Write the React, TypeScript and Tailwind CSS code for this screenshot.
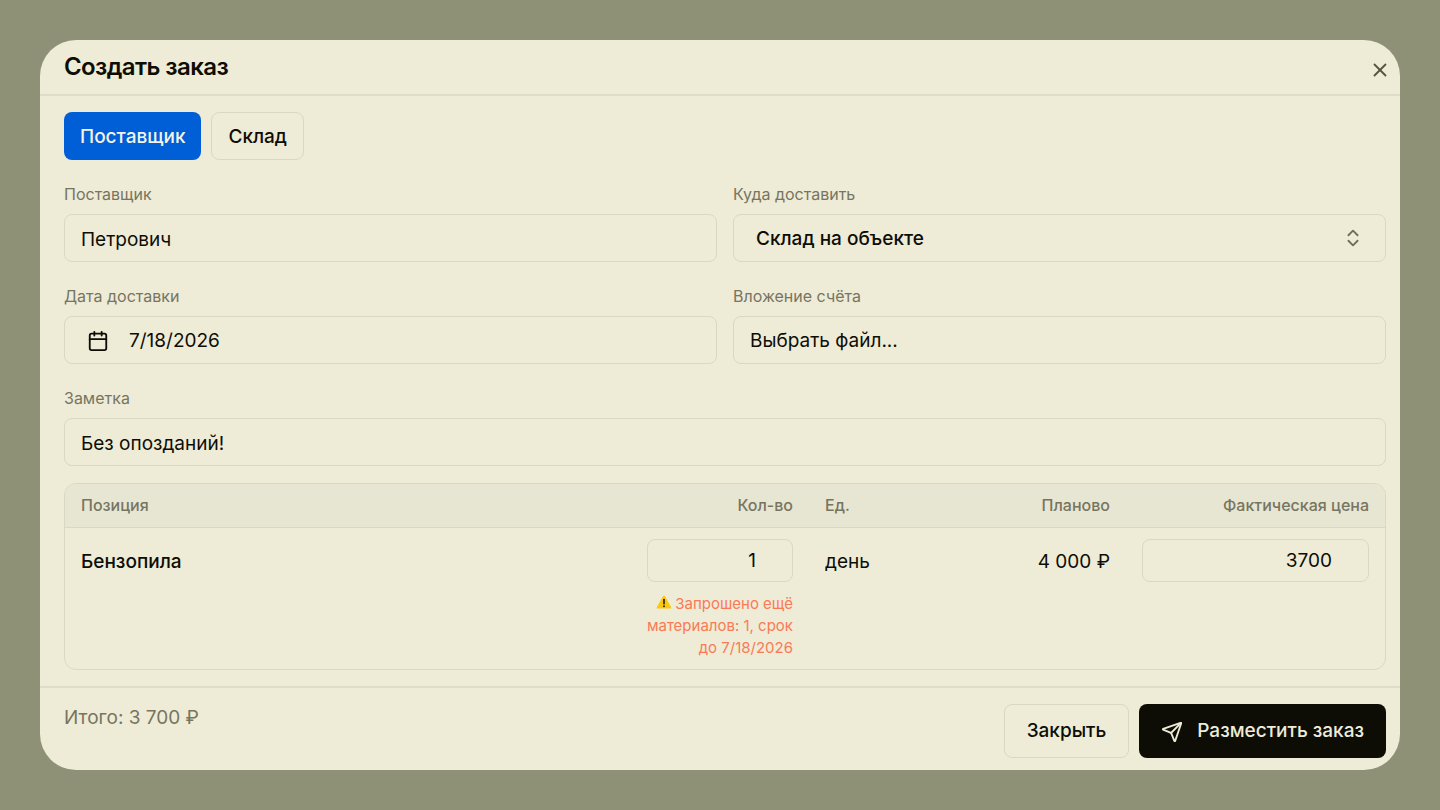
import { useState, type ReactNode } from 'react';
import { Calendar, ChevronsUpDown, Send, X } from 'lucide-react';

const fieldClass =
  'w-full h-12 pt-0.5 rounded-lg border border-[#dad8c3] bg-transparent text-[19px] text-[#0d0d05] outline-none';

const cellInputClass =
  'block w-full h-[43px] rounded-lg border border-[#dad8c3] bg-transparent pl-4 pr-9 text-right outline-none';

interface FieldProps {
  id: string;
  label: string;
  children: ReactNode;
}

function Field({ id, label, children }: FieldProps) {
  return (
    <div className="flex flex-col gap-2">
      <label htmlFor={id} className="self-start text-base text-[#77755f]">
        {label}
      </label>
      {children}
    </div>
  );
}

interface OrderItem {
  name: string;
  quantity: string;
  unit: string;
  planned: string;
  price: string;
  warning: string;
}

const items: OrderItem[] = [
  {
    name: 'Бензопила',
    quantity: '1',
    unit: 'день',
    planned: '4 000 ₽',
    price: '3700',
    warning: 'Запрошено ещё материалов: 1, срок до 7/18/2026',
  },
];

function WarningIcon() {
  return (
    <svg viewBox="0 0 16 14" className="inline-block w-4 h-3.5 mr-[3px] -mt-1" aria-hidden="true">
      <path d="M7.2 1.1a.9.9 0 0 1 1.6 0l6.4 11.1a.9.9 0 0 1-.8 1.3H1.6a.9.9 0 0 1-.8-1.3z" fill="#fdc70c" />
      <path d="M8 4.6v4.2" stroke="#1f1c08" strokeWidth="1.6" strokeLinecap="round" />
      <circle cx="8" cy="11.2" r="0.95" fill="#1f1c08" />
    </svg>
  );
}

function ItemsTable() {
  return (
    <div className="mt-[17px] overflow-hidden rounded-xl border border-[#dad8c3]">
      <table className="w-full table-fixed text-[19px]">
        <thead className="bg-[#e7e6d3] text-base text-[#77755f]">
          <tr className="h-[43px] border-b border-[#dad8c3]">
            <th className="px-4 text-left font-medium">Позиция</th>
            <th className="w-[178px] px-4 text-right font-medium">Кол-во</th>
            <th className="w-[117px] px-4 text-left font-medium">Ед.</th>
            <th className="w-[200px] px-4 text-right font-medium">Планово</th>
            <th className="w-[259px] px-4 text-right font-medium">Фактическая цена</th>
          </tr>
        </thead>
        <tbody>
          {items.map((item) => (
            <tr key={item.name} className="align-top">
              <td className="px-4 pt-5 font-medium leading-7">{item.name}</td>
              <td className="px-4 pt-[11px] pb-2.5">
                <input
                  aria-label="Кол-во"
                  inputMode="numeric"
                  defaultValue={item.quantity}
                  className={cellInputClass}
                />
                <p className="mt-[11px] -ml-2 text-right text-[15px] leading-[22px] text-[#fb7a55]">
                  <WarningIcon />
                  {item.warning}
                </p>
              </td>
              <td className="px-4 pt-5 leading-7">{item.unit}</td>
              <td className="px-4 pt-5 text-right leading-7">{item.planned}</td>
              <td className="px-4 pt-[11px]">
                <input
                  aria-label="Фактическая цена"
                  inputMode="numeric"
                  defaultValue={item.price}
                  className={cellInputClass}
                />
              </td>
            </tr>
          ))}
        </tbody>
      </table>
    </div>
  );
}

export default function App() {
  const [source, setSource] = useState<'supplier' | 'stock'>('supplier');

  const tabClass = (active: boolean) =>
    active
      ? 'h-12 pt-0.5 rounded-lg bg-[#005fd7] px-4 font-medium text-[#f4f3e6]'
      : 'h-12 pt-0.5 rounded-lg border border-[#dad8c3] px-4 font-medium';

  return (
    <div className="min-h-screen bg-[#8e9176] p-10 font-[Inter,sans-serif] text-[19px] text-[#0d0d05]">
      <div role="dialog" aria-labelledby="order-title" className="overflow-hidden rounded-[36px] bg-[#eeebd7]">
        <header className="flex h-14 items-center justify-between border-b-2 border-[#dfddc9] pl-6 pr-[9px]">
          <h1 id="order-title" className="text-2xl font-semibold tracking-tight">
            Создать заказ
          </h1>
          <button type="button" aria-label="Закрыть окно" className="pt-1.5 text-[#55543f]">
            <X size={22} />
          </button>
        </header>

        <main className="pl-6 pr-3.5 py-4">
          <div className="flex gap-2.5">
            <button type="button" className={tabClass(source === 'supplier')} onClick={() => setSource('supplier')}>
              Поставщик
            </button>
            <button type="button" className={tabClass(source === 'stock')} onClick={() => setSource('stock')}>
              Склад
            </button>
          </div>

          <div className="mt-[22px] grid grid-cols-2 gap-x-4 gap-y-[22px]">
            <Field id="supplier" label="Поставщик">
              <input id="supplier" defaultValue="Петрович" className={`${fieldClass} px-4`} />
            </Field>
            <Field id="destination" label="Куда доставить">
              <div className="relative">
                <select id="destination" className={`${fieldClass} appearance-none pl-[22px] pr-14 font-medium`}>
                  <option>Склад на объекте</option>
                </select>
                <ChevronsUpDown
                  size={22}
                  className="pointer-events-none absolute right-[22px] top-[13px] text-[#6f6d56]"
                />
              </div>
            </Field>
            <Field id="date" label="Дата доставки">
              <button id="date" type="button" className={`${fieldClass} flex items-center gap-5 px-[22px]`}>
                <Calendar size={22} />
                7/18/2026
              </button>
            </Field>
            <Field id="invoice" label="Вложение счёта">
              <button id="invoice" type="button" className={`${fieldClass} px-4 text-left`}>
                Выбрать файл...
              </button>
            </Field>
            <div className="col-span-2">
              <Field id="note" label="Заметка">
                <input id="note" defaultValue="Без опозданий!" className={`${fieldClass} px-4`} />
              </Field>
            </div>
          </div>

          <ItemsTable />
        </main>

        <footer className="flex items-start justify-between border-t-2 border-[#dfddc9] pl-6 pr-3.5 pt-4 pb-3">
          <p className="text-[#77755f]">Итого: 3 700 ₽</p>
          <div className="flex gap-2.5">
            <button type="button" className="h-[54px] pt-0.5 rounded-lg border border-[#dad8c3] px-[22px] font-medium">
              Закрыть
            </button>
            <button
              type="button"
              className="flex h-[54px] items-center gap-3.5 pt-0.5 rounded-lg bg-[#0d0d05] px-[22px] font-medium text-[#eeebd7]"
            >
              <Send size={22} />
              Разместить заказ
            </button>
          </div>
        </footer>
      </div>
    </div>
  );
}
